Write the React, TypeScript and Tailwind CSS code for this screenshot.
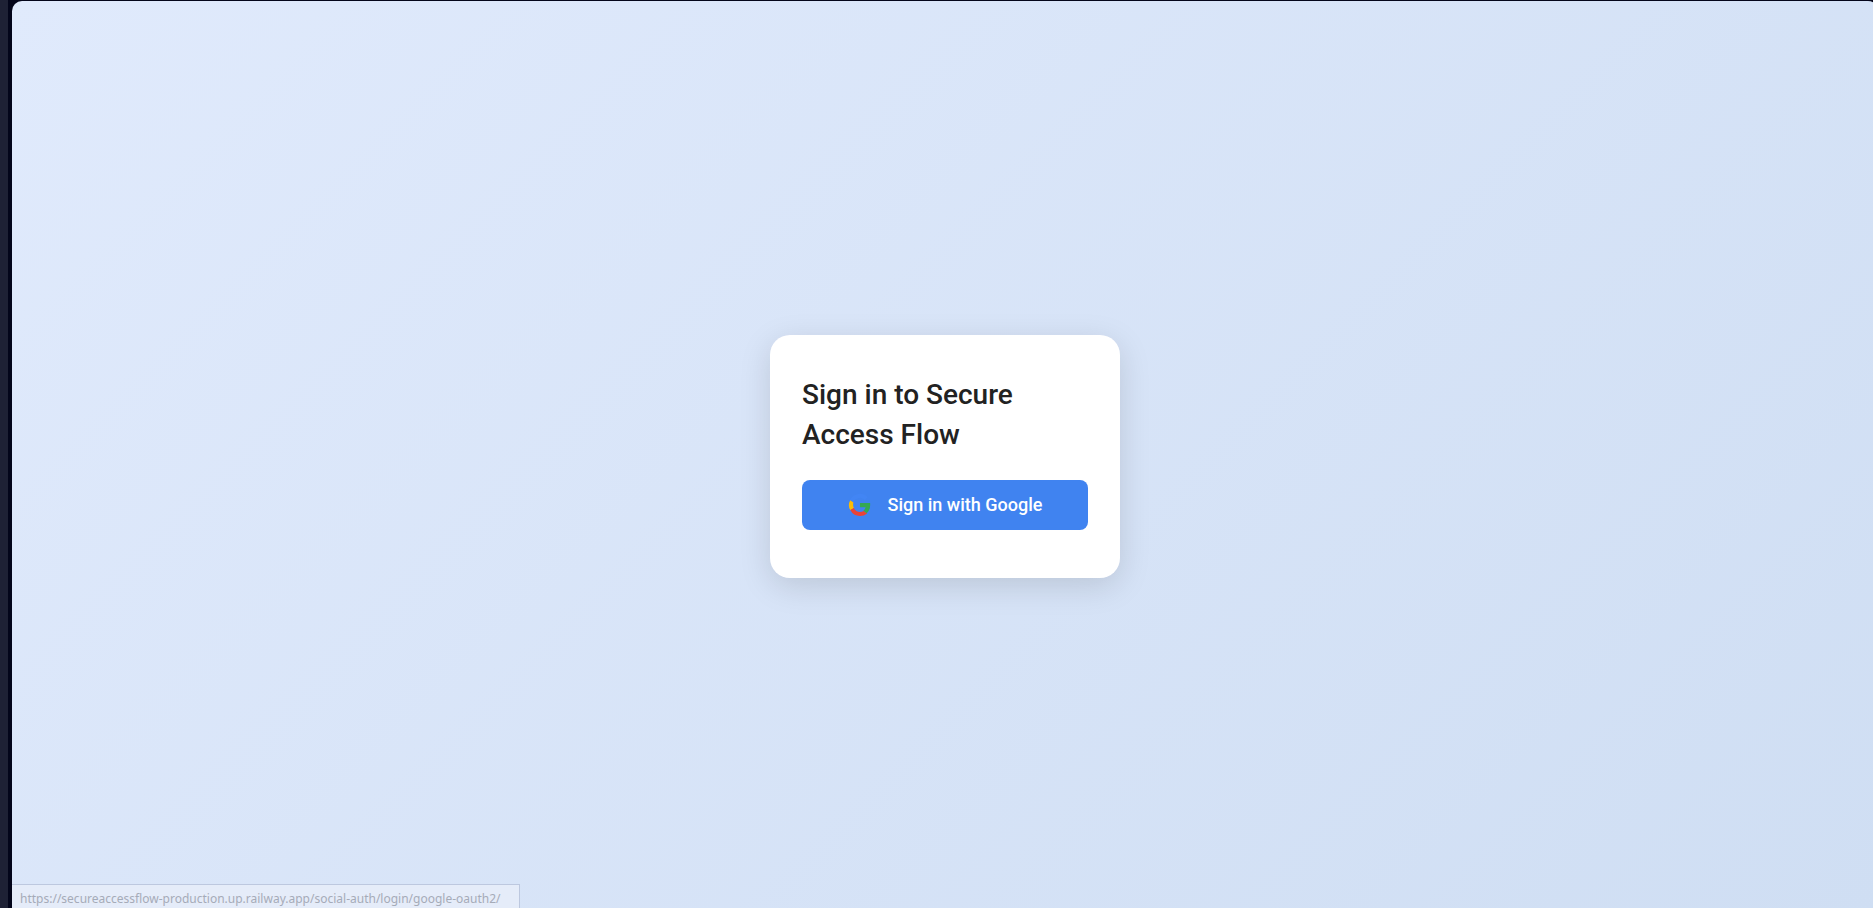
function GoogleMark() {
  return (
    <svg viewBox="0 0 24 24" className="size-6 shrink-0" aria-hidden="true">
      <path fill="none" stroke="#4285f4" strokeWidth="4" d="M3.8 7.6 A9 9 0 0 1 18.2 5.6" />
      <path fill="#fbbc05" d="M2.2 7.2 L5.4 9.6 Q4.6 12.3 5.9 15 L2.4 17.2 Q-0.6 12.4 2.2 7.2Z" />
      <path fill="#ea4335" d="M2.3 17.1 L5.8 14.9 Q7.7 18.8 12 19 Q14.2 19 15.8 17.8 L19.1 20.5 Q16 23.1 11.8 23 Q5.3 22.9 2.3 17.1Z" />
      <path fill="#34a853" d="M12 10 H22.1 Q22.7 16.8 18.7 20.3 L15.4 17.8 Q17 16.6 17.6 14.3 H12Z" />
    </svg>
  );
}

export default function App() {
  return (
    <div className="flex h-screen overflow-hidden bg-[#03051a] font-['Roboto',sans-serif]">
      <div className="mr-1 w-2 shrink-0 bg-[#1e2135]" />
      <main className="mt-px -mr-[5px] -mb-[4px] flex flex-1 items-center justify-center rounded-[10px] bg-linear-135 from-[#e0eafc] to-[#cfdef3]">
        <section className="w-[350px] rounded-[20px] bg-white px-8 pt-10 pb-12 shadow-[0_8px_32px_rgba(0,0,0,0.13)]">
          <h1 className="mb-[25px] text-[28px] leading-10 font-medium text-[#222222]">
            Sign in to Secure Access Flow
          </h1>
          <a
            href="https://secureaccessflow-production.up.railway.app/social-auth/login/google-oauth2/"
            className="flex h-[50px] items-center justify-center gap-4 rounded-lg bg-[#4083f0] text-lg font-medium text-white"
          >
            <GoogleMark />
            Sign in with Google
          </a>
        </section>
      </main>
      <div className="absolute bottom-0 left-3 min-w-[508px] border-t border-r border-[#bdc8df] bg-[#e5ecf9] px-2 pt-[5px] font-['Noto_Sans',sans-serif] text-xs leading-[18px] whitespace-nowrap text-[#a5abb8]">
        https://secureaccessflow-production.up.railway.app/social-auth/login/google-oauth2/
      </div>
    </div>
  );
}
